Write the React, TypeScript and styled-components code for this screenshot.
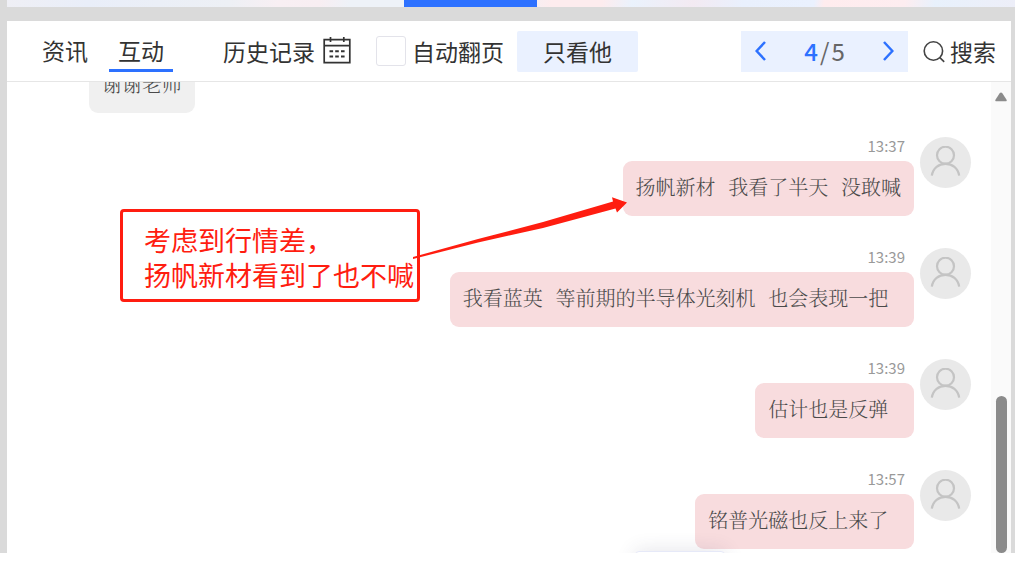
import React from 'react';
import styled, { createGlobalStyle } from 'styled-components';

const GlobalStyle = createGlobalStyle`
  * { box-sizing: border-box; }
  body {
    margin: 0;
    background: #fff;
    font-family: "Noto Sans CJK SC", "Noto Sans", sans-serif;
  }
  button, input { margin: 0; padding: 0; border: 0; background: none; font: inherit; color: inherit; }
  button { cursor: pointer; }
`;

const Frame = styled.div`
  display: flex;
  flex-direction: column;
  height: calc(100vh - 23px);
  margin-right: 2px;
  padding: 0 4px 0 7px;
  background: #dadada;
`;

const Banner = styled.div`
  display: flex;
  flex: none;
  height: 7px;
  margin: 0 -4px 14px 0;
  background: linear-gradient(100deg, #efeff5 0%, #e9eef9 8%, #edf0f5 22%, #f8eff3 27%, #f8eef2 31%, #eef2f8 34%,
    #eef2f8 50%, #fdecee 54%, #fdecee 59%, #eaf2fc 62%, #f3eaf2 68%, #e9f0fd 73%, #eaf1fe 80%, #ffecee 81%, #fdedf0 89%, #e8f1fc 92%, #edeef8 100%);
`;

const BannerTab = styled.div`
  width: 133px;
  margin-left: 397px;
  background: #2d71ff;
`;

const Panel = styled.main`
  display: flex;
  flex: 1;
  flex-direction: column;
  min-height: 0;
  background: #fff;
`;

const Toolbar = styled.header`
  display: flex;
  flex: none;
  align-items: center;
  height: 61px;
  padding: 0 15px 0 26px;
  border-bottom: 1px solid #e6e6e6;
  color: #333;
  font-size: 23px;
  line-height: 40px;
  white-space: nowrap;
`;

const Tabs = styled.nav`
  display: flex;
  gap: 12px;
  margin-right: 50px;
`;

const Tab = styled.button<{ $active?: boolean }>`
  padding: 0 9px;
  border-bottom: 3px solid ${(p) => (p.$active ? '#2d71ff' : 'transparent')};
  line-height: 38px;
`;

const IconButton = styled.button`
  display: flex;
  align-items: center;
`;

const HistoryButton = styled(IconButton)`
  gap: 8px;
  margin-right: 25px;
`;

const SearchButton = styled(IconButton)`
  gap: 4px;
  margin-left: 15px;
`;

const CheckLabel = styled.label`
  display: flex;
  align-items: center;
  gap: 6px;
  margin-right: 13px;
`;

const Checkbox = styled.input`
  appearance: none;
  width: 30px;
  height: 30px;
  border: 1px solid #e3e3ea;
  border-radius: 3px;
  background: #fff;
`;

const OnlyHim = styled.button`
  width: 121px;
  height: 41px;
  border-radius: 2px;
  background: #eaf1ff;
`;

const Pager = styled.div`
  display: flex;
  align-items: center;
  justify-content: space-between;
  width: 167px;
  height: 41px;
  margin-left: auto;
  padding: 0 14px;
  background: #eaf1ff;
`;

const PagerButton = styled.button`
  display: flex;
  color: #2d71ff;
`;

const PageCount = styled.span`
  display: flex;
  gap: 2px;
  color: #666;
  font-size: 24px;
`;

const CurrentPage = styled.b`
  color: #2d71ff;
  font-weight: 500;
`;

const Chat = styled.section`
  position: relative;
  display: flex;
  flex: 1;
  min-height: 0;
  overflow: hidden;
`;

const Messages = styled.ul`
  display: flex;
  flex: 1;
  flex-direction: column;
  justify-content: flex-end;
  min-width: 0;
  margin: 0;
  padding: 0 20px 4px 82px;
  list-style: none;
`;

const Message = styled.li<{ $own?: boolean }>`
  display: flex;
  flex: none;
  justify-content: ${(p) => (p.$own ? 'flex-end' : 'flex-start')};
  gap: 6px;
  margin-bottom: ${(p) => (p.$own ? 32 : 24)}px;
  &:last-child { margin-bottom: 0; }
`;

const Body = styled.div<{ $own?: boolean }>`
  display: flex;
  flex-direction: column;
  align-items: ${(p) => (p.$own ? 'flex-end' : 'flex-start')};
`;

const Time = styled.time`
  height: 24px;
  padding-right: 9px;
  color: #999;
  font-size: 15px;
  line-height: 18px;
`;

const Bubble = styled.p<{ $own?: boolean }>`
  height: 55px;
  margin: 0;
  padding: 0 13px;
  border-radius: 9px;
  background: ${(p) => (p.$own ? '#f8dcde' : '#f0f0f0')};
  color: #4a4a4a;
  font-family: "DejaVu Serif", "Noto Serif CJK SC", "Noto Sans CJK SC", serif;
  font-size: 20px;
  font-weight: 300;
  line-height: 54px;
  white-space: pre;
`;

const Avatar = styled.span`
  display: flex;
  align-items: center;
  justify-content: center;
  width: 51px;
  height: 51px;
  border-radius: 50%;
  background: #e9e9e9;
  color: #c4c4c4;
`;

const ScrollTrack = styled.div`
  display: flex;
  flex: none;
  flex-direction: column;
  align-items: center;
  justify-content: space-between;
  width: 20px;
  padding-top: 10px;
  background: #fafafa;
`;

const ScrollThumb = styled.div`
  width: 11px;
  height: 34%;
  border-radius: 6px;
  background: #8b8b8b;
`;

const NewMessagePill = styled.div`
  position: absolute;
  right: 286px;
  bottom: -38px;
  width: 90px;
  height: 40px;
  border: 1px solid #e6e9f8;
  border-radius: 4px;
  background: #fff;
  box-shadow: 0 0 20px rgba(60, 60, 90, 0.14);
`;

const Note = styled.div`
  position: absolute;
  top: 127px;
  left: 113px;
  padding: 10px 3px 7px 21px;
  border: 3px solid #ff1d10;
  border-radius: 4px;
  color: #ff1d10;
  font-size: 27px;
  line-height: 35px;
  white-space: nowrap;
`;

const NoteArrow = styled.svg`
  position: absolute;
  top: 108px;
  left: 403px;
`;

const messages = [
  { time: '13:37', text: '扬帆新材  我看了半天  没敢喊' },
  { time: '13:39', text: '我看蓝英  等前期的半导体光刻机  也会表现一把  ' },
  { time: '13:39', text: '估计也是反弹  ' },
  { time: '13:57', text: '铭普光磁也反上来了  ' },
];

const CalendarIcon = () => (
  <svg width="28" height="28" viewBox="0 0 28 28" fill="none" stroke="#333" strokeWidth="1.7" aria-hidden="true">
    <path d="M1.2 2.700h25.6v23H1.2zM1.2 8.700h25.6M7.5 0v5M20.8 0v5" />
    <path d="M6.5 14.300h3.6M12.2 14.300h3.6M18 14.300h3.6M6.5 19.500h3.6M12.2 19.500h3.6M18 19.500h3.6" strokeWidth="2" />
  </svg>
);

const SearchIcon = () => (
  <svg width="23" height="23" viewBox="0 0 23 23" fill="none" stroke="#444" strokeWidth="1.6" aria-hidden="true">
    <circle cx="10.4" cy="11" r="9.2" />
    <path d="M16.6 17.4l4.6 4.4" />
  </svg>
);

const Chevron = ({ d }: { d: string }) => (
  <svg width="11" height="20" viewBox="0 0 11 20" fill="none" stroke="currentColor" strokeWidth="2.5" aria-hidden="true">
    <path d={d} />
  </svg>
);

const PersonIcon = () => (
  <svg width="31" height="33" viewBox="0 0 31 33" fill="none" stroke="currentColor" strokeWidth="2.2" aria-hidden="true">
    <circle cx="15.5" cy="9.2" r="8.5" />
    <path d="M1.8 29.6C3 22 8.800 17.800 15.500 17.800S28 22 29.200 29.600" />
  </svg>
);

export default function App() {
  return (
    <>
      <GlobalStyle />
      <Frame>
        <Banner>
          <BannerTab />
        </Banner>
        <Panel>
          <Toolbar>
            <Tabs>
              <Tab>资讯</Tab>
              <Tab $active>互动</Tab>
            </Tabs>
            <HistoryButton>
              历史记录
              <CalendarIcon />
            </HistoryButton>
            <CheckLabel>
              <Checkbox type="checkbox" />
              自动翻页
            </CheckLabel>
            <OnlyHim>只看他</OnlyHim>
            <Pager>
              <PagerButton aria-label="上一页">
                <Chevron d="M10 1L1.600 10L10 19" />
              </PagerButton>
              <PageCount>
                <CurrentPage>4</CurrentPage>
                <span>/</span>
                <span>5</span>
              </PageCount>
              <PagerButton aria-label="下一页">
                <Chevron d="M1 1L9.400 10L1 19" />
              </PagerButton>
            </Pager>
            <SearchButton>
              <SearchIcon />
              搜索
            </SearchButton>
          </Toolbar>
          <Chat>
            <Messages>
              <Message>
                <Body>
                  <Bubble>谢谢老师</Bubble>
                </Body>
              </Message>
              {messages.map((m, i) => (
                <Message key={i} $own>
                  <Body $own>
                    <Time>{m.time}</Time>
                    <Bubble $own>{m.text}</Bubble>
                  </Body>
                  <Avatar>
                    <PersonIcon />
                  </Avatar>
                </Message>
              ))}
            </Messages>
            <ScrollTrack>
              <svg width="12" height="10" viewBox="0 0 12 10" fill="#8b8b8b" aria-hidden="true">
                <path d="M4.800 1Q6 0 7.200 1L11.700 8Q12 9.200 11 9.200H1Q0 9.200 .3 8z" />
              </svg>
              <ScrollThumb />
            </ScrollTrack>
            <NewMessagePill />
            <Note>
              考虑到行情差，
              <br />
              扬帆新材看到了也不喊
            </Note>
            <NoteArrow width="220" height="72" viewBox="0 0 220 72" fill="#ff1d10" aria-hidden="true">
              <path d="M3 67L68 49L133 32L203 11.500L202 7.300L217 12.500L207 22.500L205.500 18.500L133 38L68 52.500L3 69z" />
            </NoteArrow>
          </Chat>
        </Panel>
      </Frame>
    </>
  );
}
